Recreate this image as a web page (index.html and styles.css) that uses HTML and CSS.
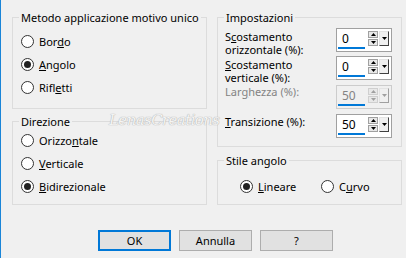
FILE: index.html
```html
<!DOCTYPE html>
<html lang="it">
<head>
<meta charset="utf-8">
<link rel="stylesheet" href="styles.css">
</head>
<body>
<div class="dlg">
  <div class="main">
    <div class="col left">
      <fieldset class="grp g1">
        <legend>Metodo applicazione motivo unico</legend>
        <div class="body">
          <div class="radio"><span class="rb"></span><span>Bor<u>d</u>o</span></div>
          <div class="radio"><span class="rb on"></span><span><u>A</u>ngolo</span></div>
          <div class="radio"><span class="rb"></span><span>Rifl<u>e</u>tti</span></div>
        </div>
      </fieldset>
      <fieldset class="grp g2">
        <legend>Direzione</legend>
        <div class="body">
          <div class="radio"><span class="rb"></span><span>Orizzo<u>n</u>tale</span></div>
          <div class="radio"><span class="rb"></span><span><u>V</u>erticale</span></div>
          <div class="radio"><span class="rb on"></span><span><u>B</u>idirezionale</span></div>
        </div>
      </fieldset>
    </div>
    <div class="col right">
      <fieldset class="grp g3">
        <legend>Impostazioni</legend>
        <div class="body">
          <div class="row r1">
            <div class="lbl two">S<u>c</u>ostamento<br>orizzontale (%):</div>
            <div class="spin">
              <div class="field"><span class="val">0</span><span class="ul"></span></div>
              <div class="updown"><span class="ub"><svg width="5" height="3" viewBox="0 0 5 3"><polygon points="2.5,0 5,3 0,3"/></svg></span><span class="ub"><svg width="5" height="3" viewBox="0 0 5 3"><polygon points="0,0 5,0 2.5,3"/></svg></span></div>
              <div class="drop"><svg width="5" height="3" viewBox="0 0 5 3"><polygon points="0,0 5,0 2.5,3"/></svg></div>
            </div>
          </div>
          <div class="row r2">
            <div class="lbl two"><u>S</u>costamento<br>verticale (%):</div>
            <div class="spin">
              <div class="field"><span class="val">0</span><span class="ul"></span></div>
              <div class="updown"><span class="ub"><svg width="5" height="3" viewBox="0 0 5 3"><polygon points="2.5,0 5,3 0,3"/></svg></span><span class="ub"><svg width="5" height="3" viewBox="0 0 5 3"><polygon points="0,0 5,0 2.5,3"/></svg></span></div>
              <div class="drop"><svg width="5" height="3" viewBox="0 0 5 3"><polygon points="0,0 5,0 2.5,3"/></svg></div>
            </div>
          </div>
          <div class="row r3 disabled">
            <div class="lbl">Lar<u>g</u>hezza (%):</div>
            <div class="spin">
              <div class="field"><span class="val">50</span><span class="ul"></span></div>
              <div class="updown"><span class="ub"><svg width="5" height="3" viewBox="0 0 5 3"><polygon points="2.5,0 5,3 0,3"/></svg></span><span class="ub"><svg width="5" height="3" viewBox="0 0 5 3"><polygon points="0,0 5,0 2.5,3"/></svg></span></div>
              <div class="drop"><svg width="5" height="3" viewBox="0 0 5 3"><polygon points="0,0 5,0 2.5,3"/></svg></div>
            </div>
          </div>
          <div class="row r4">
            <div class="lbl"><u>T</u>ransizione (%):</div>
            <div class="spin">
              <div class="field"><span class="val">50</span><span class="ul"></span></div>
              <div class="updown"><span class="ub"><svg width="5" height="3" viewBox="0 0 5 3"><polygon points="2.5,0 5,3 0,3"/></svg></span><span class="ub"><svg width="5" height="3" viewBox="0 0 5 3"><polygon points="0,0 5,0 2.5,3"/></svg></span></div>
              <div class="drop"><svg width="5" height="3" viewBox="0 0 5 3"><polygon points="0,0 5,0 2.5,3"/></svg></div>
            </div>
          </div>
        </div>
      </fieldset>
      <fieldset class="grp g4">
        <legend>Stile angolo</legend>
        <div class="body hradios">
          <div class="radio"><span class="rb on"></span><span><u>L</u>ineare</span></div>
          <div class="radio"><span class="rb"></span><span>C<u>u</u>rvo</span></div>
        </div>
      </fieldset>
    </div>
  </div>
  <div class="buttons">
    <div class="btn def">OK</div>
    <div class="btn">Annulla</div>
    <div class="btn">?</div>
  </div>
  <div class="watermark">LenasCreations</div>
</div>
</body>
</html>
```
FILE: styles.css
```css
* { box-sizing: border-box; }
html, body { margin: 0; padding: 0; background: #f0f0f0; }
body { font-family: "Noto Sans", "Open Sans", sans-serif; font-size: 11px; color: #000; }
u { text-decoration: underline; text-underline-offset: 1px; }

.dlg {
  position: relative;
  width: 406px;
  height: 258px;
  border-left: 1px solid #1a85d8;
  padding: 10px 0 0 11px;
  overflow: hidden;
}
.main { display: flex; gap: 10px; }
.col { display: flex; flex-direction: column; }
.left { width: 195px; }
.right { width: 185px; }

.grp {
  margin: 0;
  padding: 0;
  border: 1px solid #dcdcdc;
  min-width: 0;
}
.grp legend {
  margin-left: 6px;
  padding: 0 2px;
  line-height: 15px;
  white-space: nowrap;
}

.g1 { height: 99px; }
.g1 .body { padding: 5px 0 0 8px; }
.g2 { height: 91px; margin-top: 5px; }
.g2 .body { padding: 0 0 0 8px; }

.radio { display: flex; align-items: center; height: 23px; gap: 5px; }
.rb {
  width: 13px; height: 13px; border-radius: 50%;
  border: 1px solid #333; background: #fff;
  display: flex; align-items: center; justify-content: center;
  flex: none;
}
.rb.on::after {
  content: ""; width: 7px; height: 7px; border-radius: 50%; background: #222;
}

.g3 { height: 137px; }
.g3 .body { padding: 3px 0 0 7px; }
.row { display: flex; align-items: flex-start; justify-content: space-between; padding-right: 9px; }
.r1 { height: 28px; }
.r2 { height: 29px; }
.r3 { height: 29px; }
.r4 { height: 24px; }
.lbl { line-height: 13px; padding-top: 2px; white-space: nowrap; }
.lbl.two { padding-top: 2px; }
.r3 .lbl { padding-top: 0px; }
.r4 .lbl { padding-top: 1px; }
.disabled .lbl { color: #838383; }

.spin {
  display: flex;
  width: 56px; height: 24px;
  border: 1px solid #a0a0a0;
  background: #fff;
  padding: 2px 2px 0 1px;
  flex: none;
}
.field { width: 27px; display: flex; flex-direction: column; margin-right: 3px; }
.val { line-height: 15px; padding-left: 4px; height: 16px; font-size: 12px; }
.ul { height: 2px; background: #0078d7; margin-top: 0; }
.updown { width: 10px; display: flex; flex-direction: column; gap: 1px; margin-right: 1px; }
.ub {
  height: 7px; border: 1px solid #a0a0a0; background: #e8e8e8;
  display: flex; align-items: center; justify-content: center;
}
.drop {
  width: 10px; height: 15px;
  border-top: 1px solid #e3e3e3; border-left: 1px solid #e3e3e3;
  border-right: 1px solid #404040; border-bottom: 1px solid #404040;
  background: #f0f0f0;
  display: flex; align-items: center; justify-content: center;
}
svg { display: block; fill: #000; }
.disabled .spin { border-color: #cccccc; background: #f0f0f0; }
.disabled .val { color: #838383; }
.disabled svg { fill: #a0a0a0; }
.disabled .ub { border-color: #cfcfcf; }
.disabled .drop { border-right-color: #a0a0a0; border-bottom-color: #a0a0a0; }

.g4 { height: 52px; margin-top: 6px; }
.hradios { display: flex; padding: 7px 0 0 22px; }
.hradios .radio:first-child { width: 81px; }

.buttons { display: flex; gap: 8px; margin: 25px 0 0 86px; }
.btn {
  width: 73px; height: 21px;
  border: 1px solid #adadad; background: #e1e1e1;
  display: flex; align-items: center; justify-content: center;
  line-height: 15px;
}
.btn.def { border: 2px solid #0078d7; }

.watermark {
  position: absolute;
  left: 108px; top: 111px;
  font-family: "DejaVu Serif", serif;
  font-style: italic;
  font-size: 15px;
  color: #f4f4f4;
  text-shadow: 0 0 1px #b0b0b0, 0 0 1px #b0b0b0;
  letter-spacing: -0.6px;
}
```
